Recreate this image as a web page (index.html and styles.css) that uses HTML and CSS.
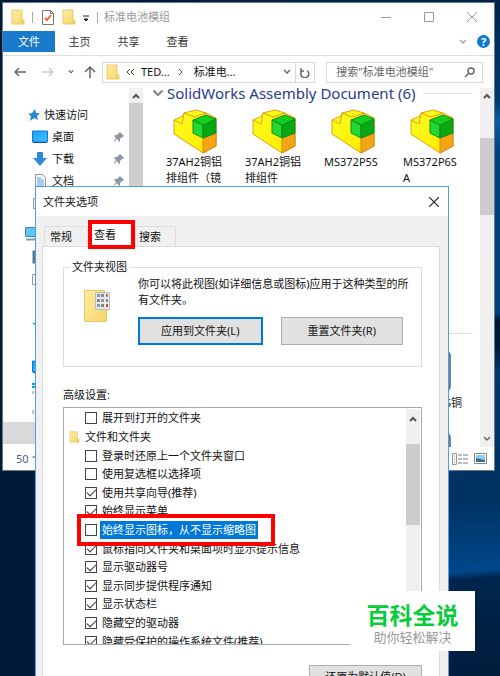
FILE: index.html
```html
<!DOCTYPE html>
<html lang="zh-CN">
<head>
<meta charset="utf-8">
<title>文件夹选项</title>
<link rel="stylesheet" href="styles.css">
</head>
<body>
<svg class="sprites" aria-hidden="true">
  <defs>
    <linearGradient id="gold" x2="1" y2="1"><stop offset="0" stop-color="#ffeda6"/><stop offset="1" stop-color="#f6d466"/></linearGradient>
    <linearGradient id="yellow" x2="1" y2="1"><stop offset="0" stop-color="#ffff20"/><stop offset="1" stop-color="#ffe600"/></linearGradient>
    <linearGradient id="screen" x2="1" y2="1"><stop offset="0" stop-color="#12a0f5"/><stop offset="1" stop-color="#49c0ff"/></linearGradient>
    <symbol id="folder" viewBox="0 0 14 16"><path d="M1 1h10v10h2v4H1z" fill="url(#gold)" stroke="#edcb6c"/><path d="M11 11v4" stroke="#e8c257"/></symbol>
    <symbol id="assembly" viewBox="0 0 46 46">
      <path d="M2 11 11 7 12 4 24 1 34 4 44 9v28L31 44 2 25z" fill="url(#yellow)" stroke="#e0a010"/>
      <path d="M2 11l8 4 2-11 10 4M22 8l12-4" fill="none" stroke="#e0a010"/>
      <path d="M31 29 44 24v13L31 44z" fill="#f5a414" stroke="#d88a08"/>
      <path d="M21 11 31 16v13L21 24z" fill="#22d833" stroke="#118c18"/>
      <path d="M31 16 44 10v14L31 29z" fill="#08a812" stroke="#118c18"/>
      <path d="M21 11 34 6l10 4-13 6z" fill="#12d01d" stroke="#118c18"/>
    </symbol>
    <symbol id="pin" viewBox="0 0 10 10"><path d="M6 0l4 4-1 1-1 0-2 2 0 2-1 1-2-3-3 3 0-1 2-3-2-2 1-1 2 0 2-2z" fill="#8b97a3"/></symbol>
    <symbol id="up" viewBox="0 0 8 6"><path d="M1 5l3-3 3 3" fill="none" stroke="#555" stroke-width="2"/></symbol>
    <symbol id="down" viewBox="0 0 8 6"><path d="M1 1l3 3 3-3" fill="none" stroke="currentColor" stroke-width="1.5"/></symbol>
    <symbol id="desk" viewBox="0 0 16 13"><path d="M.5 .5h15v11H.5z" fill="url(#screen)" stroke="#1479c9"/><path d="M1 12h14" stroke="#0b5a9c"/></symbol>
    <symbol id="part" viewBox="0 0 46 40"><path d="M4 1h39l1 2v34l-1 2H4z" fill="#b8cdec" stroke="#6b7a94" stroke-width="2"/><path d="M41 4v12" stroke="#d9a43a" stroke-width="2"/><path d="M5 18h38M5 23h38" stroke="#fff"/></symbol>
  </defs>
</svg>

<main class="desktop">
  <section class="explorer" aria-label="标准电池模组">
    <header class="titlebar">
      <svg class="folder"><use href="#folder"/></svg>
      <span class="rule"></span>
      <svg class="props" viewBox="0 0 12 15"><path d="M.5.5h8l3 3v11H.5z" fill="#fff" stroke="#777"/><path d="M8.500.5v3h3" fill="none" stroke="#777"/><path d="M3 8l2 2 4-5" fill="none" stroke="#ee6532" stroke-width="2"/></svg>
      <svg class="folder"><use href="#folder"/></svg>
      <svg class="caret" viewBox="0 0 8 8"><path d="M1 1h6M2 4h4L4 6z" stroke="#222" fill="#222"/></svg>
      <span class="rule"></span>
      <span class="caption">标准电池模组</span>
      <div class="winbtns">
        <button aria-label="最小化"><svg viewBox="0 0 10 10"><path d="M0 5.500h10" stroke="#999"/></svg></button>
        <button aria-label="最大化"><svg viewBox="0 0 10 10"><path d="M.5.5h9v9h-9z" fill="none" stroke="#999"/></svg></button>
        <button aria-label="关闭"><svg viewBox="0 0 10 10"><path d="M0 0l10 10M10 0L0 10" stroke="#999"/></svg></button>
      </div>
    </header>

    <nav class="ribbon">
      <button class="file">文件</button>
      <button>主页</button>
      <button>共享</button>
      <button>查看</button>
      <span class="ribbon-end">
        <svg class="chev light"><use href="#down"/></svg>
        <button class="help" aria-label="帮助">?</button>
      </span>
    </nav>

    <div class="addressbar">
      <button class="back" aria-label="后退"><svg class="arrow" viewBox="0 0 12 10"><path d="M12 5H1M5 1L1 5l4 4" fill="none" stroke="#666" stroke-width="1.500"/></svg></button>
      <button class="forward" aria-label="前进"><svg class="arrow" viewBox="0 0 12 10"><path d="M0 5h11M7 1l4 4-4 4" fill="none" stroke="#ccc" stroke-width="1.500"/></svg></button>
      <button class="small" aria-label="最近"><svg class="chev tiny"><use href="#down"/></svg></button>
      <button class="small" aria-label="上移"><svg class="arrow" viewBox="0 0 12 12"><path d="M6 12V1M1 6l5-5 5 5" fill="none" stroke="#666" stroke-width="1.500"/></svg></button>
      <div class="path">
        <svg class="folder"><use href="#folder"/></svg>
        <svg class="dbl" viewBox="0 0 8 6"><path d="M4 0L1 3l3 3M8 0L5 3l3 3" fill="none" stroke="#444"/></svg>
        <span>TED...</span>
        <svg class="sep" viewBox="0 0 5 6"><path d="M1 0l3 3-3 3" fill="none" stroke="#444"/></svg>
        <span>标准电...</span>
        <svg class="chev drop"><use href="#down"/></svg>
        <button class="refresh" aria-label="刷新"><svg viewBox="0 0 10 11"><path d="M7 3.500A4 4 0 1 1 2.500 3.500M1 1v3h3" fill="none" stroke="#666" stroke-width="1.500"/></svg></button>
      </div>
      <label class="search">
        <input type="text" aria-label="搜索" placeholder='搜索"标准电池模组"'>
        <svg viewBox="0 0 11 10"><circle cx="7" cy="4" r="3" fill="none" stroke="#666" stroke-width="1.500"/><path d="M5 6L1 10" stroke="#666" stroke-width="1.500"/></svg>
      </label>
    </div>

    <div class="body">
      <aside class="tree">
        <div class="node root"><svg class="i12" viewBox="0 0 12 12"><path d="M7 0l1 4 4 0-3 3 1 4-4-2-4 3 1-5-3-2 4-1z" fill="#2489d2"/></svg>快速访问</div>
        <div class="node"><svg class="i16"><use href="#desk"/></svg>桌面<svg class="pin"><use href="#pin"/></svg></div>
        <div class="node"><svg class="i16" viewBox="0 0 16 16"><path d="M5 1h6v6h4l-7 8-7-8h4z" fill="#3388d8"/></svg>下载<svg class="pin"><use href="#pin"/></svg></div>
        <div class="node"><svg class="i16" viewBox="0 0 16 16"><path d="M3.500 1.500h7l3 3v11h-10z" fill="#fff" stroke="#8a97a0"/><path d="M5 5h4M5 7h7M5 9h7M5 11h7M5 13h7" stroke="#48a0d8"/></svg>文档<svg class="pin"><use href="#pin"/></svg></div>
        <div class="node"><svg class="i16" viewBox="0 0 16 16"><path d="M1.500 3.500h13v10h-13z" fill="#fff" stroke="#999"/></svg></div>
        <div class="node root computer"><svg class="i16" viewBox="0 0 16 14"><path d="M.5.5h15v9H.5z" fill="#62c5f7" stroke="#3c8ab8"/><path d="M1 12.500h13" stroke="#7fa0b0" stroke-width="2"/></svg></div>
        <div class="node"><svg class="i16" viewBox="0 0 16 14"><path d="M.5.5h15v13H.5z" fill="#59788c"/></svg></div>
        <div class="node"><svg class="i16" viewBox="0 0 16 16"><path d="M.5 3.500h15v10H.5z" fill="#fff" stroke="#999"/></svg></div>
        <div class="node"></div>
        <div class="node"><svg class="i16" viewBox="0 0 16 16"><path d="M0 8h3v2z" fill="#3388d8"/></svg></div>
        <div class="node"></div>
        <div class="node"><svg class="i16"><use href="#desk"/></svg></div>
        <div class="node"><svg class="i16" viewBox="0 0 16 16"><path d="M0 3h9M0 6h9" stroke="#00a2ed" stroke-width="2"/><path d="M1 10v3" stroke="#888"/></svg></div>
        <div class="node"><svg class="i16" viewBox="0 0 16 16"><path d="M1 7v4" stroke="#888"/></svg></div>
        <div class="node selected"></div>
      </aside>
      <div class="vbar nav-bar"><svg class="chev"><use href="#up"/></svg><i></i></div>
      <div class="content">
        <h2><svg class="wide"><use href="#down"/></svg>SolidWorks Assembly Document (6)</h2>
        <div class="files">
          <div><svg><use href="#assembly"/></svg>37AH2铜铝排组件（镜</div>
          <div><svg><use href="#assembly"/></svg>37AH2铜铝排组件</div>
          <div><svg><use href="#assembly"/></svg>MS372P5S</div>
          <div><svg><use href="#assembly"/></svg>MS372P6SA</div>
        </div>
        <hr>
        <div class="parts">
          <svg><use href="#part"/></svg>
          <span>S铜</span>
          <svg><use href="#part"/></svg>
        </div>
      </div>
      <div class="vbar main-bar"><svg class="chev"><use href="#up"/></svg><i></i><svg class="chev bold"><use href="#down"/></svg></div>
    </div>

    <footer class="status">
      <span>50 个</span>
      <svg class="details" viewBox="0 0 16 12"><path d="M.5.5h4v11h-4z" fill="#fff" stroke="#999"/><path d="M2 3h1M2 6h1" stroke="#3b8bd0"/><path d="M2 9h1" stroke="#e04040"/><path d="M6 2h4M11 2h5M6 6h4M11 6h5M6 10h4M11 10h5" stroke="#777"/></svg>
      <svg class="thumbs" viewBox="0 0 13 11"><path d="M.5.5h12v10H.5z" fill="#fff" stroke="#888"/><path d="M2 2h9v7H2z" fill="#8fc8fa"/><path d="M2 5l4 1 5 1v2H2z" fill="#33708b"/></svg>
    </footer>
  </section>

  <section class="dialog" role="dialog" aria-labelledby="dlg-title">
    <header>
      <h1 id="dlg-title">文件夹选项</h1>
      <button aria-label="关闭"><svg viewBox="0 0 10 10"><path d="M0 0l10 10M10 0L0 10" stroke="#222" stroke-width="1.200"/></svg></button>
    </header>
    <div class="tabs" role="tablist">
      <button role="tab">常规</button>
      <button role="tab" aria-selected="true" class="active">查看</button>
      <button role="tab">搜索</button>
    </div>
    <div class="panel">
      <fieldset>
        <legend>文件夹视图</legend>
        <svg class="bigfolder" viewBox="0 0 26 33">
          <path d="M.5 1.500h20v19h2v12H.5z" fill="url(#gold)" stroke="#e8c866"/>
          <path d="M11.500 3.500h14v17h-14z" fill="#e8e8e8" stroke="#bbb"/>
          <path d="M13 5h3v3h-3zM22 5h2v3h-2zM17 10h3v3h-3zM13 15h3v3h-3z" fill="#7d9cb8"/>
          <path d="M17 5h3v3h-3zM22 10h2v3h-2zM13 10h3v3h-3zM17 15h3v3h-3z" fill="#888"/>
          <path d="M22 5h1v2h-1zM22 15h2v3h-2zM18 16h1v1h-1z" fill="#c44"/>
        </svg>
        <div class="view">
          <p>你可以将此视图(如详细信息或图标)应用于这种类型的所有文件夹。</p>
          <div class="actions">
            <button class="btn default">应用到文件夹(L)</button>
            <button class="btn">重置文件夹(R)</button>
          </div>
        </div>
      </fieldset>
      <div class="adv-label" id="adv">高级设置:</div>
      <div class="list" role="group" aria-labelledby="adv">
        <div class="rows">
          <label><input type="checkbox"><span>展开到打开的文件夹</span></label>
          <div class="group"><svg><use href="#folder"/></svg>文件和文件夹</div>
          <label><input type="checkbox"><span>登录时还原上一个文件夹窗口</span></label>
          <label><input type="checkbox"><span>使用复选框以选择项</span></label>
          <label><input type="checkbox" checked><span>使用共享向导(推荐)</span></label>
          <label><input type="checkbox" checked><span>始终显示菜单</span></label>
          <label class="picked"><input type="checkbox"><span>始终显示图标，从不显示缩略图</span></label>
          <label><input type="checkbox" checked><span>鼠标指向文件夹和桌面项时显示提示信息</span></label>
          <label><input type="checkbox" checked><span>显示驱动器号</span></label>
          <label><input type="checkbox" checked><span>显示同步提供程序通知</span></label>
          <label><input type="checkbox" checked><span>显示状态栏</span></label>
          <label><input type="checkbox" checked><span>隐藏空的驱动器</span></label>
          <label><input type="checkbox" checked><span>隐藏受保护的操作系统文件(推荐)</span></label>
        </div>
        <div class="vbar list-bar"><svg class="chev"><use href="#up"/></svg><i></i></div>
      </div>
      <button class="btn restore">还原为默认值(D)</button>
    </div>
  </section>

  <aside class="watermark"><strong>百科全说</strong><span>助你轻松解决</span></aside>
</main>
</body>
</html>
```

FILE: styles.css
```css
* { box-sizing: border-box; }
body { margin: 0; font: 11px/16px "Noto Sans", "Noto Sans CJK SC", sans-serif; color: #111; }
button { font: inherit; color: inherit; border: 0; padding: 0; background: none; }
svg { display: block; flex: none; }
h1, h2, p { margin: 0; font-weight: 400; }
.sprites { position: absolute; width: 0; height: 0; }

.desktop {
  position: relative; height: 100vh; overflow: hidden;
  background:
    linear-gradient(90deg, #001b38 0 40%, transparent 40%),
    linear-gradient(176deg, #001c3d 0, #00305f 12%, #00396c 19%, #0d5ca3 22%, #00407d 26%, #003f7a 49%, #001630 50%, #001c3a 54%, #00366b 57%, #003262 75%, #00478a 85%, #00264d 86%, #001c3c 100%);
}

/* Explorer window */
.explorer {
  position: absolute; top: 2px; left: 2px; right: 5px; height: 469px;
  display: flex; flex-direction: column; background: #fff; border: 1px solid #66788a;
}
.folder { width: 14px; height: 16px; }
.chev { width: 8px; height: 6px; color: #666; }
.titlebar { display: flex; align-items: center; height: 28px; padding-left: 8px; color: #999; }
.rule { width: 1px; height: 11px; margin: 0 9px 0 7px; background: #aaa; }
.props { width: 12px; height: 15px; margin-right: 8px; }
.caret { width: 8px; height: 8px; margin: 3px 0 0 6px; }
.caption { margin-left: -3px; }
.winbtns { display: flex; gap: 33px; margin: 0 17px 0 auto; }
.winbtns button, .winbtns svg { width: 10px; height: 10px; }

.ribbon { display: flex; height: 25px; padding-bottom: 3px; border-bottom: 1px solid #ddd; color: #333; }
.ribbon button { width: 49px; }
.ribbon .file { width: 52px; background: #1979ca; color: #fff; }
.ribbon-end { display: flex; align-items: center; gap: 10px; margin: 0 4px 0 auto; }
.light { color: #aaa; }
.ribbon .help { width: 13px; height: 13px; border-radius: 50%; background: #0f78d4; color: #fff; font-weight: 700; line-height: 13px; }

.addressbar { display: flex; flex: none; align-items: center; height: 32px; padding: 0 11px; }
.addressbar .back { width: 28px; }
.addressbar .forward { width: 24px; }
.addressbar .small { width: 18px; }
.arrow { width: 12px; height: 12px; }
.tiny { width: 6px; margin-left: 2px; }
.path { display: flex; flex: 3; align-items: center; min-width: 0; height: 21px; padding-left: 3px; border: 1px solid #d9d9d9; }
.dbl { width: 8px; height: 6px; margin: 0 7px 0 6px; }
.sep { width: 5px; height: 6px; margin: 0 11px 0 8px; }
.drop { margin: 0 4px 0 auto; }
.refresh { display: grid; place-items: center; width: 19px; height: 19px; border-left: 1px solid #d9d9d9; }
.refresh svg { width: 10px; height: 11px; }
.search { display: flex; flex: 2; align-items: center; min-width: 0; height: 21px; margin-left: 11px; padding: 0 7px 0 9px; border: 1px solid #d9d9d9; }
.search input { flex: 1; min-width: 0; padding: 0; border: 0; outline: 0; font: inherit; }
.search input::placeholder { color: #666; }
.search svg { width: 11px; height: 10px; }

.body { display: flex; flex: 1; min-height: 0; overflow: hidden; }
.tree { flex: none; width: 126px; padding-top: 16px; }
.node { display: flex; align-items: center; gap: 4px; height: 22px; padding: 0 5px 0 29px; }
.node.root { padding-left: 25px; }
.node.computer { height: 32px; padding: 8px 0 0 22px; }
.node.selected { background: #d9d9d9; }
.i12 { width: 12px; height: 12px; }
.i16 { width: 16px; height: 16px; }
.pin { width: 10px; height: 10px; margin-left: auto; }
.vbar { display: flex; flex: none; flex-direction: column; align-items: center; width: 14px; background: #f0f0f0; }
.vbar i { width: 100%; background: #cdcdcd; }
.nav-bar .chev { margin: 5px 0 4px; }
.nav-bar i { flex: 1; }
.content { flex: 1; min-width: 0; overflow: hidden; }
.content h2 { display: flex; align-items: center; height: 16px; margin-top: -3px; padding-left: 9px; color: #2b3a92; font-size: 15px; white-space: nowrap; }
.content h2::after { content: ""; flex: 1; height: 1px; margin: 0 7px; background: #ddd; }
.wide { width: 12px; height: 9px; margin-right: 3px; color: #888; }
.files { display: grid; grid-template-columns: repeat(4, 79px); height: 232px; padding: 8px 0 0 23px; }
.files div { width: 60px; word-break: break-all; }
.files svg { width: 46px; height: 46px; margin: 0 0 -1px 6px; }
hr { margin: 0 7px; border: 0; border-top: 1px solid #ddd; }
.parts { display: flex; flex-direction: column; align-items: flex-end; padding: 18px 18px 0 0; }
.parts svg { width: 46px; height: 38px; margin-right: 9px; }
.parts span { margin: 5px 0 23px; }
.main-bar .chev { margin-top: 5px; }
.main-bar i { height: 77px; margin-top: 39px; }
.main-bar .bold { margin: auto 0 5px; }
.status { display: flex; align-items: center; height: 23px; padding: 0 7px 0 13px; color: #49617c; }
.details { width: 16px; height: 12px; margin-left: auto; }
.thumbs { width: 13px; height: 11px; margin-left: 6px; }

/* Folder options dialog */
.dialog { position: absolute; top: 186px; left: 35px; right: 51px; padding-bottom: 20px; background: #f0f0f0; border: 1px solid #4b9fe2; }
.dialog header { display: flex; align-items: center; justify-content: space-between; height: 29px; padding: 0 9px 0 7px; background: #fff; }
.dialog h1 { font-size: 11px; }
.dialog header svg { width: 10px; height: 10px; }
.tabs { display: flex; align-items: flex-end; height: 30px; padding-left: 8px; }
.tabs button { height: 20px; width: 44px; padding: 0 0 0 5px; border: 1px solid #ddd; border-bottom: 0; text-align: left; }
.tabs .active { width: 47px; height: 29px; margin-bottom: -3px; padding-left: 2px; background: #fff; border: 4px solid #f00; z-index: 1; line-height: 18px; }
.tabs button:last-child { width: 41px; padding-left: 3px; }
.panel { margin: 0 8px 0 6px; padding: 12px 17px 20px 20px; background: #fff; border: 1px solid #dcdcdc; }
fieldset { display: flex; height: 108px; min-width: 0; margin: 0; padding: 0 0 0 20px; border: 1px solid #dcdcdc; }
legend { margin-left: -14px; padding: 0 2px; }
.bigfolder { width: 26px; height: 33px; margin: 14px 28px 0 0; }
.view { flex: 1; padding: 1px 6px 0 0; }
.actions { display: flex; gap: 18px; margin: 9px 12px 0 0; }
.btn { height: 28px; background: #e1e1e1; border: 1px solid #adadad; }
.actions .btn { flex: 1; }
.btn.default { border: 2px solid #0078d7; }
.adv-label { margin: 20px 0 4px; }
.list { display: flex; height: 238px; padding: 1px; overflow: hidden; border: 1px solid #a5a8ae; }
.rows { display: grid; flex: 1; grid-template-rows: repeat(13, 1fr); height: 242px; }
.rows label, .group { display: flex; align-items: center; gap: 3px; min-height: 0; padding-left: 20px; white-space: nowrap; }
.rows .group { gap: 5px; padding-left: 4px; }
.group svg { width: 11px; height: 12px; }
.rows label span { padding: 1px 2px; }
.rows input { display: grid; place-items: center; appearance: none; flex: none; width: 12px; height: 12px; margin: 0; border: 1px solid #444; background: #fff; }
.rows input:checked::before { content: ""; width: 8px; height: 4px; margin-bottom: 2px; border: solid #333; border-width: 0 0 1px 1px; transform: rotate(-45deg); }
.picked { position: relative; }
.rows .picked span { background: #0078d7; color: #fff; }
.picked::after { content: ""; position: absolute; top: -7px; bottom: -7px; left: 12px; width: 190px; border: 4px solid #f00; }
.list-bar .chev { margin: 7px 0 22px; }
.list-bar i { height: 81px; }
.btn.restore { display: block; width: 113px; height: 24px; margin: 20px 0 0 auto; }

.watermark { position: absolute; top: 591px; right: 25px; width: 125px; height: 60px; padding-top: 10px; background: #fff; text-align: center; }
.watermark strong, .watermark span { display: block; }
.watermark strong { color: #08cc39; font-size: 23px; font-weight: 700; line-height: 28px; }
.watermark span { color: #999; font-size: 13px; line-height: 16px; }
```
